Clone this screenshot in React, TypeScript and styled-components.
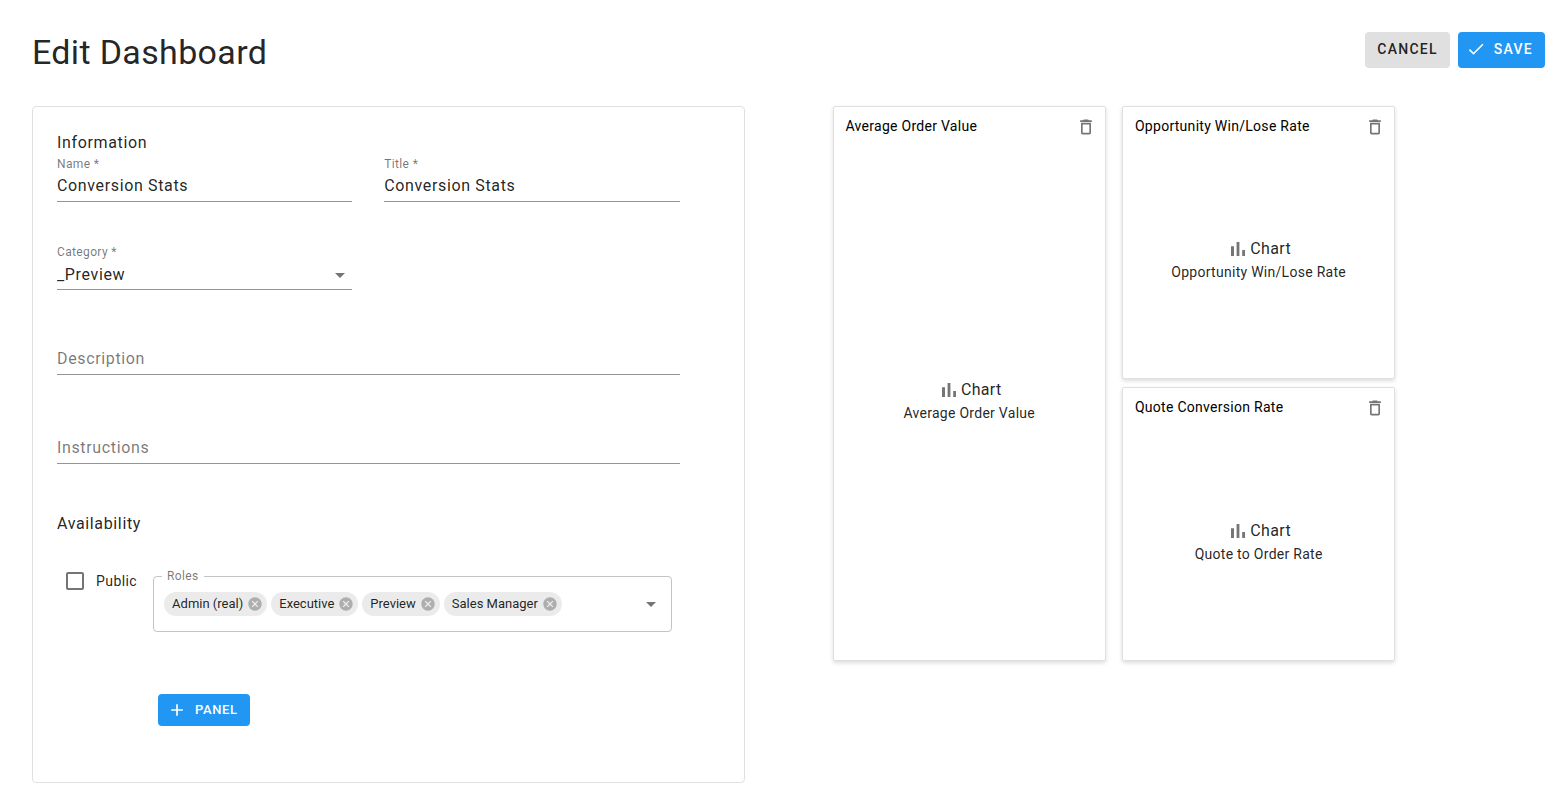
import React from "react";
import styled, { createGlobalStyle, css } from "styled-components";

const GlobalStyle = createGlobalStyle`
  *, *::before, *::after {
    box-sizing: border-box;
  }
  body {
    margin: 0;
    background: #fff;
    color: rgba(0, 0, 0, 0.87);
    font-family: Roboto, "Liberation Sans", sans-serif;
    font-size: 16px;
    line-height: 24px;
    letter-spacing: 0.04em;
  }
  button, input, select {
    font: inherit;
    color: inherit;
    letter-spacing: inherit;
  }
`;

const Page = styled.div`
  padding: 32px 8px 8px 32px;
`;

const Header = styled.header`
  display: flex;
  align-items: flex-start;
  justify-content: space-between;
  margin-bottom: 34px;
`;

const Title = styled.h1`
  margin: 0;
  font-size: 34px;
  font-weight: 400;
  line-height: 40px;
  letter-spacing: 0.01em;
`;

const Actions = styled.div`
  display: flex;
  gap: 8px;
`;

const Button = styled.button<{ $primary?: boolean; $small?: boolean }>`
  display: inline-flex;
  align-items: center;
  gap: 8px;
  height: ${(p) => (p.$small ? 32 : 36)}px;
  padding: ${(p) => (p.$small ? "0 12px 0 13px" : "0 12px 2px")};
  border: 0;
  border-radius: 4px;
  background: ${(p) => (p.$primary ? "#2196f3" : "#e0e0e0")};
  color: ${(p) => (p.$primary ? "#fff" : "rgba(0, 0, 0, 0.87)")};
  font-size: ${(p) => (p.$small ? 13 : 14)}px;
  font-weight: 500;
  letter-spacing: ${(p) => (p.$small ? 0.05 : 0.09)}em;
  text-transform: uppercase;
  cursor: pointer;

  svg {
    margin-left: -4px;
  }
`;

const Columns = styled.main`
  display: grid;
  grid-template-columns: 1fr 1fr;
  align-items: start;
  column-gap: 88px;
`;

const FormCard = styled.form`
  padding: 25px 64px 55px 24px;
  border: 1px solid #e0e0e0;
  border-radius: 4px;
`;

const SectionTitle = styled.h2`
  margin: 0;
  font-size: 16px;
  font-weight: 400;
  line-height: 22px;
`;

const FieldRow = styled.div`
  display: grid;
  grid-template-columns: 1fr 1fr;
  column-gap: 32px;
  margin-bottom: 40px;

  &:nth-of-type(2) {
    margin-bottom: 36px;
  }
`;

const Field = styled.div`
  display: flex;
  flex-direction: column;
  height: 48px;
  border-bottom: 1px solid #949494;
`;

const FieldLabel = styled.label`
  color: rgba(0, 0, 0, 0.54);
  font-size: 12px;
  line-height: 20px;
  letter-spacing: 0.03em;
`;

const control = css`
  width: 100%;
  min-width: 0;
  padding: 0;
  border: 0;
  outline: 0;
  background: transparent;
`;

const TextInput = styled.input`
  ${control}
  height: 24px;

  &::placeholder {
    color: rgba(0, 0, 0, 0.54);
    opacity: 1;
  }
`;

const WideField = styled.div`
  display: flex;
  align-items: flex-end;
  height: 49px;
  margin-bottom: 40px;
  padding-bottom: 3px;
  border-bottom: 1px solid #949494;

  & + h2 {
    margin-top: 49px;
  }
`;

const SelectWrap = styled.div`
  display: flex;
  align-items: center;
  height: 26px;

  svg {
    flex: none;
    margin-left: -24px;
    pointer-events: none;
  }
`;

const Select = styled.select`
  ${control}
  height: 24px;
  appearance: none;
`;

const Availability = styled.div`
  display: flex;
  align-items: flex-start;
  gap: 16px;
  margin: 35px 0 62px;
  padding: 0 8px 0 9px;
`;

const CheckLabel = styled.label`
  display: flex;
  align-items: center;
  gap: 12px;
  font-size: 14px;
  line-height: 22px;
  letter-spacing: 0.03em;
`;

const Checkbox = styled.input`
  appearance: none;
  width: 18px;
  height: 18px;
  margin: 0;
  border: 2px solid #757575;
  border-radius: 2px;
`;

const Roles = styled.fieldset`
  flex: 1;
  display: flex;
  align-items: center;
  gap: 4px;
  min-width: 0;
  margin: 0;
  padding: 10px 8px 15px 10px;
  border: 1px solid #c4c4c4;
  border-radius: 4px;
`;

const Legend = styled.legend`
  margin-left: -2px;
  padding: 0 5px;
  color: rgba(0, 0, 0, 0.54);
  font-size: 12px;
  line-height: 12px;
  letter-spacing: 0.03em;
`;

const Chip = styled.span`
  display: inline-flex;
  align-items: center;
  gap: 4px;
  height: 24px;
  padding: 0 4px 0 8px;
  border-radius: 12px;
  background: #ebebeb;
  font-size: 13px;
  letter-spacing: normal;
  white-space: nowrap;
`;

const IconButton = styled.button`
  display: inline-flex;
  flex: none;
  padding: 0;
  border: 0;
  background: transparent;
  cursor: pointer;
`;

const RoleInput = styled.input`
  ${control}
  flex: 1;
  width: 0;
  height: 24px;
`;

const PanelAction = styled.div`
  padding-left: 101px;
`;

const Panels = styled.section`
  display: grid;
  grid-template-columns: 1fr 1fr;
  gap: 8px 16px;
  width: 79%;
`;

const PanelCard = styled.article<{ $tall?: boolean }>`
  display: flex;
  flex-direction: column;
  border: 1px solid #e0e0e0;
  border-radius: 2px;
  background: #fff;
  box-shadow: 0 2px 4px rgba(0, 0, 0, 0.14);
  ${(p) => (p.$tall ? "grid-row: span 2;" : "aspect-ratio: 1;")}
`;

const PanelHeader = styled.header`
  display: flex;
  align-items: flex-start;
  justify-content: space-between;
  height: 35px;
  padding: 10px 9px 0 12px;
`;

const PanelTitle = styled.h3`
  margin: 0;
  color: #000;
  font-size: 14px;
  font-weight: 400;
  line-height: 18px;
  letter-spacing: 0.02em;
`;

const PanelBody = styled.div`
  flex: 1;
  display: flex;
  flex-direction: column;
  align-items: center;
  justify-content: center;
`;

const ChartLine = styled.div`
  display: flex;
  letter-spacing: 0.02em;
`;

const ChartName = styled.div`
  font-size: 14px;
  line-height: 22px;
  letter-spacing: 0.02em;
`;

const paths = {
  check: "M9 16.17L4.83 12l-1.42 1.41L9 19 21 7l-1.41-1.41z",
  add: "M19 13h-6v6h-2v-6H5v-2h6V5h2v6h6v2z",
  arrow: "M7 10l5 5 5-5z",
  chart: "M5 9.2h3V19H5zM10.6 5h2.8v14h-2.8zm5.6 8H19v6h-2.8z",
  trash:
    "M6 19c0 1.1.9 2 2 2h8c1.1 0 2-.9 2-2V7H6v12zM8 9h8v10H8V9zm7.5-5l-1-1h-5l-1 1H5v2h14V4z",
  cancel:
    "M12 2C6.47 2 2 6.47 2 12s4.47 10 10 10 10-4.47 10-10S17.53 2 12 2zm5 13.59L15.59 17 12 13.41 8.41 17 7 15.59 10.59 12 7 8.41 8.41 7 12 10.59 15.59 7 17 8.41 13.41 12 17 15.59z",
};

function Icon({
  name,
  size = 24,
  color = "#757575",
}: {
  name: keyof typeof paths;
  size?: number;
  color?: string;
}) {
  return (
    <svg width={size} height={size} viewBox="0 0 24 24" fill={color} aria-hidden="true">
      <path d={paths[name]} />
    </svg>
  );
}

function Panel({ title, chart, tall }: { title: string; chart: string; tall?: boolean }) {
  return (
    <PanelCard $tall={tall}>
      <PanelHeader>
        <PanelTitle>{title}</PanelTitle>
        <IconButton type="button" aria-label={`Delete ${title}`}>
          <Icon name="trash" size={20} />
        </IconButton>
      </PanelHeader>
      <PanelBody>
        <ChartLine>
          <Icon name="chart" />
          Chart
        </ChartLine>
        <ChartName>{chart}</ChartName>
      </PanelBody>
    </PanelCard>
  );
}

const roles = ["Admin (real)", "Executive", "Preview", "Sales Manager"];

export default function App() {
  return (
    <Page>
      <GlobalStyle />
      <Header>
        <Title>Edit Dashboard</Title>
        <Actions>
          <Button type="button">Cancel</Button>
          <Button type="submit" form="dashboard" $primary>
            <Icon name="check" size={20} color="#fff" />
            Save
          </Button>
        </Actions>
      </Header>
      <Columns>
        <FormCard id="dashboard" onSubmit={(e) => e.preventDefault()}>
          <SectionTitle>Information</SectionTitle>
          <FieldRow>
            <Field>
              <FieldLabel htmlFor="name">Name *</FieldLabel>
              <TextInput id="name" defaultValue="Conversion Stats" />
            </Field>
            <Field>
              <FieldLabel htmlFor="title">Title *</FieldLabel>
              <TextInput id="title" defaultValue="Conversion Stats" />
            </Field>
          </FieldRow>
          <FieldRow>
            <Field>
              <FieldLabel htmlFor="category">Category *</FieldLabel>
              <SelectWrap>
                <Select id="category" defaultValue="_Preview">
                  <option>_Preview</option>
                </Select>
                <Icon name="arrow" />
              </SelectWrap>
            </Field>
          </FieldRow>
          <WideField>
            <TextInput aria-label="Description" placeholder="Description" />
          </WideField>
          <WideField>
            <TextInput aria-label="Instructions" placeholder="Instructions" />
          </WideField>
          <SectionTitle>Availability</SectionTitle>
          <Availability>
            <CheckLabel>
              <Checkbox type="checkbox" />
              Public
            </CheckLabel>
            <Roles>
              <Legend>Roles</Legend>
              {roles.map((role) => (
                <Chip key={role}>
                  {role}
                  <IconButton type="button" aria-label={`Remove ${role}`}>
                    <Icon name="cancel" size={16} color="#aeaeae" />
                  </IconButton>
                </Chip>
              ))}
              <RoleInput type="text" aria-label="Roles" />
              <IconButton type="button" aria-label="Open roles">
                <Icon name="arrow" />
              </IconButton>
            </Roles>
          </Availability>
          <PanelAction>
            <Button type="button" $primary $small>
              <Icon name="add" size={20} color="#fff" />
              Panel
            </Button>
          </PanelAction>
        </FormCard>
        <Panels>
          <Panel title="Average Order Value" chart="Average Order Value" tall />
          <Panel title="Opportunity Win/Lose Rate" chart="Opportunity Win/Lose Rate" />
          <Panel title="Quote Conversion Rate" chart="Quote to Order Rate" />
        </Panels>
      </Columns>
    </Page>
  );
}
